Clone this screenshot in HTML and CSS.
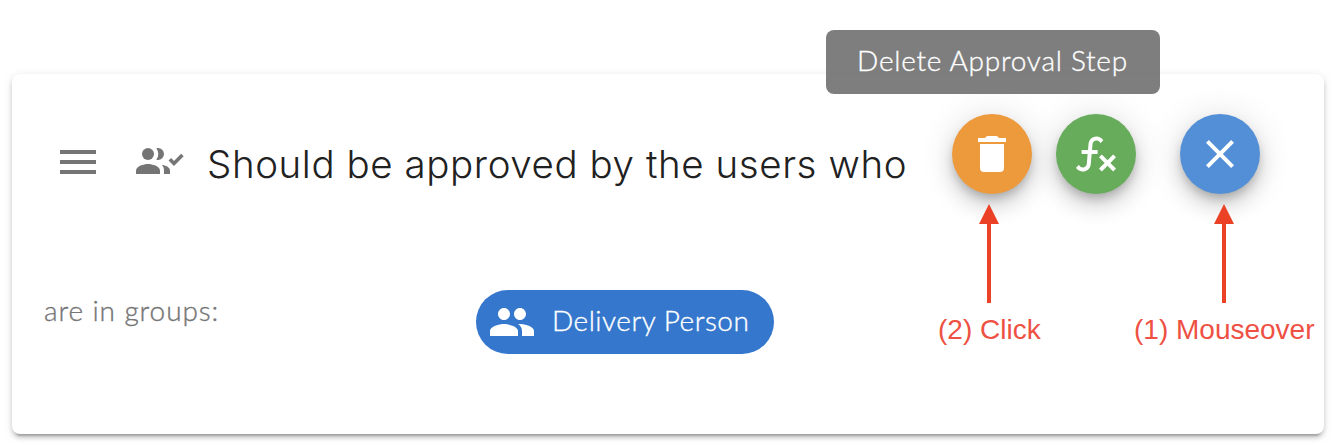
FILE: index.html
```html
<!DOCTYPE html>
<html lang="en">
<head>
<meta charset="utf-8">
<title>Approval step</title>
<link rel="stylesheet" href="styles.css">
</head>
<body>
<main class="card">
  <header class="step-header">
    <svg class="icon menu" viewBox="0 0 24 24"><path d="M3 18h18v-2H3zM3 13h18v-2H3zM3 6v2h18V6z"/></svg>
    <svg class="approvers" viewBox="0 0 48 26">
      <circle cx="12" cy="6" r="6"/>
      <path d="M20.3.3Q24.3 6 20.3 11.7A6 6 0 0 0 22 12A6 6 0 0 0 22 0A6 6 0 0 0 20.3.3Z"/>
      <path d="M0 26V22.6C0 18 8 16 12 16S24 18 24 22.6V26Z"/>
      <path d="M25.8 16.8C29.5 17.4 34 19.2 34 22.6V26H28V22.6C28 20 27.2 18.2 25.8 16.8Z"/>
      <path class="tick" d="M33.8 11.2L38 15.4L46.4 7"/>
    </svg>
    <h1 class="title">Should be approved by the users who</h1>
    <div class="actions">
      <button class="fab delete" aria-label="Delete Approval Step">
        <svg class="icon" viewBox="0 0 24 24"><path d="M6 19a2 2 0 0 0 2 2h8a2 2 0 0 0 2-2V7H6zM19 4h-3.5l-.7-.7a1 1 0 0 0-.7-.3H9.900a1 1 0 0 0-.7.3L8.500 4H5v2h14z"/></svg>
      </button>
      <button class="fab condition" aria-label="Condition">
        <svg class="icon" viewBox="0 0 24 24"><path d="M12.420 5.290C11.320 5.190 10.350 6 10.250 7.110L10 10H12.820V12H9.820L9.380 17.070C9.180 19.270 7.240 20.900 5.040 20.700C3.790 20.590 2.660 19.900 2 18.830L3.500 17.330C3.830 18.380 4.960 18.970 6 18.630C6.780 18.390 7.330 17.700 7.400 16.890L7.820 12H4.820V10H8L8.270 6.930C8.460 4.730 10.390 3.100 12.600 3.280C13.860 3.390 15 4.090 15.660 5.170L14.160 6.670C13.910 5.900 13.230 5.360 12.420 5.290M22 13.650L20.590 12.240L17.760 15.070L14.930 12.240L13.500 13.650L16.350 16.500L13.500 19.310L14.930 20.720L17.760 17.890L20.590 20.720L22 19.310L19.170 16.500Z"/></svg>
      </button>
      <button class="fab close" aria-label="Close">
        <svg class="icon" viewBox="0 0 24 24"><path d="M19 6.410L17.590 5L12 10.590L6.410 5L5 6.410L10.590 12L5 17.590L6.410 19L12 13.410L17.590 19L19 17.590L13.410 12Z"/></svg>
      </button>
    </div>
  </header>
  <section class="groups">
    <span class="label">are in groups:</span>
    <span class="chip">
      <svg class="icon" viewBox="0 0 24 24"><path d="M16 11c1.660 0 2.990-1.340 2.990-3S17.660 5 16 5s-3 1.340-3 3 1.340 3 3 3zM8 11c1.660 0 2.990-1.340 2.990-3S9.660 5 8 5 5 6.340 5 8s1.340 3 3 3zM8 13c-2.330 0-7 1.170-7 3.500V19h14v-2.500C15 14.170 10.330 13 8 13zM16 13c-.29 0-.62.020-.97.050 1.160.840 1.970 1.970 1.970 3.450V19h6v-2.500c0-2.330-4.670-3.500-7-3.500z"/></svg>
      <span class="chip-text">Delivery Person</span>
    </span>
  </section>
</main>
<div class="tooltip" role="tooltip"><span class="tooltip-text">Delete Approval Step</span></div>
<div class="note note-click">
  <svg class="arrow" viewBox="0 0 20 99"><path d="M10 0L20 20H12V99H8V20H0Z"/></svg>
  <span>(2) Click</span>
</div>
<div class="note note-hover">
  <svg class="arrow" viewBox="0 0 20 99"><path d="M10 0L20 20H12V99H8V20H0Z"/></svg>
  <span>(1) Mouseover</span>
</div>
</body>
</html>
```
FILE: styles.css
```css
* { box-sizing: border-box; }
body {
  position: relative;
  margin: 0;
  height: 446px;
  padding: 74px 16px 12px 12px;
  overflow: hidden;
  background: #fff;
  font-family: Lato, "Open Sans", sans-serif;
  font-weight: 300;
}
.card {
  height: 360px;
  border-radius: 8px;
  background: #fff;
  box-shadow: 0 6px 2px -4px rgba(0,0,0,.2), 0 4px 4px rgba(0,0,0,.14), 0 2px 10px rgba(0,0,0,.12);
}
.icon { display: block; flex: none; width: 48px; height: 48px; fill: currentColor; }
.step-header {
  display: flex;
  align-items: flex-start;
  height: 216px;
  padding: 40px 64px 0 42px;
}
.menu { margin-top: 24px; color: #757575; }
.approvers { flex: none; width: 48px; height: 26px; margin: 34px 0 0 34px; fill: #757575; }
.tick { fill: none; stroke: #757575; stroke-width: 3.6; }
.title {
  margin: 26px 0 0 23px;
  color: #212121;
  font: 300 38.500px/48px Inter, "Liberation Sans", sans-serif;
  letter-spacing: .58px;
  white-space: nowrap;
}
.actions { display: flex; gap: 24px; margin-left: auto; }
.fab {
  display: grid;
  place-items: center;
  width: 80px;
  height: 80px;
  padding: 0;
  border: 0;
  border-radius: 50%;
  color: #fff;
  box-shadow: 0 6px 10px -2px rgba(0,0,0,.2), 0 12px 20px rgba(0,0,0,.14), 0 2px 36px rgba(0,0,0,.12);
}
.delete { background: #ed9a3c; }
.condition { background: #67ac5b; }
.close { margin-left: 20px; background: #538fd6; }
.groups { display: grid; grid-template-columns: 432px auto; justify-content: start; padding-left: 32px; }
.label, .chip-text, .tooltip { font-size: 28px; -webkit-text-stroke: .35px currentColor; white-space: nowrap; }
.label { padding-top: 2px; color: #757575; line-height: 36px; letter-spacing: .9px; }
.chip {
  display: flex;
  align-items: center;
  width: 298px;
  height: 64px;
  padding-left: 12px;
  border-radius: 32px;
  background: #3577cc;
  color: #fff;
}
.chip-text { margin: -5px 0 0 16px; letter-spacing: .5px; }
.tooltip {
  position: absolute;
  left: 826px;
  top: 30px;
  display: flex;
  align-items: center;
  justify-content: center;
  width: 334px;
  height: 64px;
  padding: 0 1px 5px 0;
  border-radius: 8px;
  background: rgba(97,97,97,.82);
  color: #fff;
  letter-spacing: .75px;
}
.note {
  position: absolute;
  top: 204px;
  color: #ee5143;
  font: 400 28px/32px "Liberation Sans", sans-serif;
  white-space: nowrap;
}
.note-click { left: 938px; }
.note-hover { left: 1134px; }
.arrow { display: block; width: 20px; height: 99px; margin-bottom: 11px; fill: #eb4126; }
.note-click .arrow { margin-left: 41px; }
.note-hover .arrow { margin-left: 80px; }
```
